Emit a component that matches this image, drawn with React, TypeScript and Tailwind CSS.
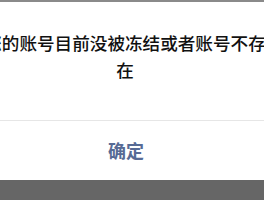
import React from "react";

export default function App() {
  const font = { fontFamily: '"Noto Sans CJK SC", "Noto Sans", sans-serif' };
  return (
    <div className="w-[264px] h-[200px] overflow-hidden bg-[#666666]" style={font}>
      <div className="h-[2px] bg-[#8a8a8a]" />
      <div className="h-[178px] bg-white flex flex-col">
        <div className="h-[118px] pt-[27px]">
          <div className="w-[296px] ml-[-23px] text-center text-[17.6px] leading-[27px] font-medium text-[#111111] whitespace-pre-line">
            {"您的账号目前没被冻结或者账号不存\n在"}
          </div>
        </div>
        <div className="border-t border-[#e6e6e6] flex-1 flex items-center justify-center">
          <span className="text-[18px] font-semibold text-[#576b95] ml-[-12px]">确定</span>
        </div>
      </div>
    </div>
  );
}
